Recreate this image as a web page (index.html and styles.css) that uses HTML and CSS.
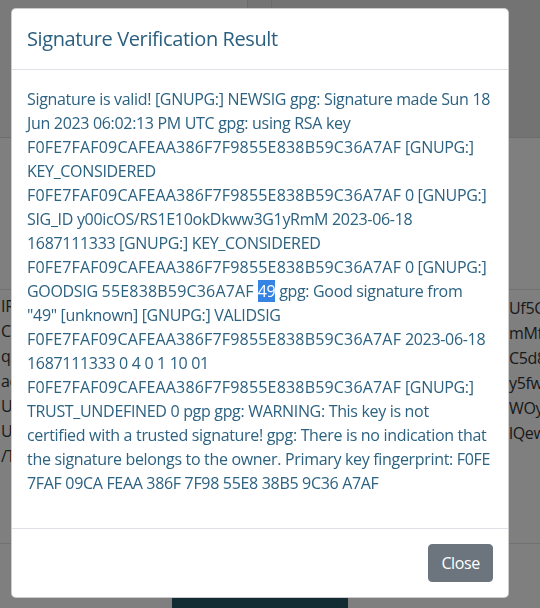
FILE: index.html
```html
<!DOCTYPE html>
<html lang="en">
<head>
<meta charset="utf-8">
<title>Signature Verification Result</title>
<link rel="stylesheet" href="styles.css">
</head>
<body>
<div class="page">
  <div class="topbar">
    <div class="top-a"></div>
    <div class="top-b"></div>
    <div class="top-c"></div>
  </div>
  <div class="gap-a"></div>
  <div class="table">
    <div class="cell-left">IR<br>Co<br>q2<br>ac<br>Up<br>UF<br>/T</div>
    <div class="cell-right">Uf5C<br>mMf<br>C5d8<br>y5fw<br>WOy7<br>lQew</div>
  </div>
  <div class="gap-b"></div>
  <div class="bottom">
    <div class="dark-btn"></div>
  </div>
</div>
<div class="backdrop"></div>
<div class="modal">
  <div class="modal-header">
    <h5 class="modal-title">Signature Verification Result</h5>
  </div>
  <div class="modal-body">
    <p class="result">Signature is valid! [GNUPG:] NEWSIG gpg: Signature made Sun 18<br>Jun 2023 06:02:13 PM UTC gpg: using RSA key<br><span class="fp">F0FE7FAF09CAFEAA386F7F9855E838B59C36A7AF</span> [GNUPG:]<br>KEY_CONSIDERED<br><span class="fp">F0FE7FAF09CAFEAA386F7F9855E838B59C36A7AF</span> 0 [GNUPG:]<br>SIG_ID y00icOS/RS1E10okDkww3G1yRmM 2023-06-18<br>1687111333 [GNUPG:] KEY_CONSIDERED<br><span class="fp">F0FE7FAF09CAFEAA386F7F9855E838B59C36A7AF</span> 0 [GNUPG:]<br>GOODSIG <span class="fp">55E838B59C36A7AF</span> <span class="sel">49</span> gpg: Good signature from<br>"49" [unknown] [GNUPG:] VALIDSIG<br><span class="fp">F0FE7FAF09CAFEAA386F7F9855E838B59C36A7AF</span> 2023-06-18<br>1687111333 0 4 0 1 10 01<br><span class="fp">F0FE7FAF09CAFEAA386F7F9855E838B59C36A7AF</span> [GNUPG:]<br>TRUST_UNDEFINED 0 pgp gpg: WARNING: This key is not<br>certified with a trusted signature! gpg: There is no indication that<br>the signature belongs to the owner. Primary key fingerprint: F0FE<br>7FAF 09CA FEAA 386F 7F98 55E8 38B5 9C36 A7AF</p>
  </div>
  <div class="modal-footer">
    <button class="btn-close" type="button">Close</button>
  </div>
</div>
</body>
</html>
```
FILE: styles.css
```css
html, body {
  margin: 0;
  padding: 0;
}
body {
  width: 540px;
  height: 608px;
  overflow: hidden;
  background: #ffffff;
  font-family: "Open Sans", "Noto Sans", sans-serif;
  font-size: 16px;
  letter-spacing: -0.32px;
}
.page {
  display: flex;
  flex-direction: column;
  height: 608px;
}
.topbar {
  display: flex;
  height: 138px;
  flex: none;
  box-sizing: border-box;
  border-bottom: 1px solid #dadada;
}
.top-a {
  width: 247px;
  background: #f4f4f4;
  border-right: 1px solid #d6d6d6;
}
.top-b {
  width: 23px;
  background: #e8e8e8;
  border-right: 1px solid #d6d6d6;
}
.top-c {
  flex: 1;
  background: #e6e6e6;
}
.gap-a {
  height: 151px;
  flex: none;
}
.table {
  flex: none;
  height: 255px;
  box-sizing: border-box;
  border-top: 1px solid #dee2e6;
  border-bottom: 1px solid #dee2e6;
  display: flex;
  justify-content: space-between;
  color: #333333;
  line-height: 25px;
  padding-top: 4px;
}
.cell-left {
  padding-left: 1px;
}
.cell-right {
  width: 31px;
  white-space: nowrap;
  overflow: hidden;
  padding-top: 2px;
}
.gap-b {
  height: 54px;
  flex: none;
}
.bottom {
  flex: 1;
  display: flex;
  padding-left: 172px;
}
.dark-btn {
  width: 176px;
  background: #265666;
}
.backdrop {
  position: fixed;
  inset: 0;
  background: rgba(0, 0, 0, 0.5);
}
.modal {
  position: fixed;
  left: 11px;
  top: 8px;
  width: 498px;
  height: 590px;
  box-sizing: border-box;
  background: #ffffff;
  border: 1px solid rgba(0, 0, 0, 0.2);
  border-radius: 5px;
  display: flex;
  flex-direction: column;
  color: #2c6282;
}
.modal-header {
  padding: 15px;
  border-bottom: 1px solid #dee2e6;
  flex: none;
}
.modal-title {
  margin: 0;
  font-size: 20px;
  font-weight: 400;
  line-height: 30px;
  letter-spacing: -0.4px;
  color: #2a5f7f;
}
.modal-body {
  flex: 1;
  padding: 17px 15px 15px;
  overflow: hidden;
}
.result {
  margin: 0;
  line-height: 24px;
  white-space: nowrap;
}
.fp {
  letter-spacing: 0.18px;
}
.sel {
  background: #3584e4;
  color: #ffffff;
}
.modal-footer {
  flex: none;
  border-top: 1px solid #dee2e6;
  padding: 15px;
  display: flex;
  justify-content: flex-end;
}
.btn-close {
  font-family: inherit;
  font-size: 16px;
  letter-spacing: -0.35px;
  line-height: 24px;
  padding: 6px 12px;
  border: 1px solid #6c757d;
  border-radius: 4px;
  background: #6c757d;
  color: #ffffff;
}
```
